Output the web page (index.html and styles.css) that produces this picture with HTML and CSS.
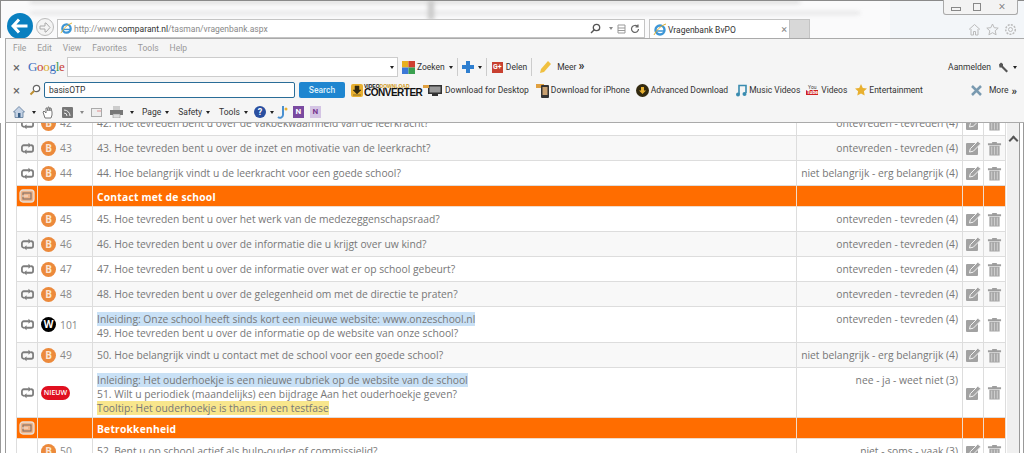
FILE: index.html
```html
<!DOCTYPE html>
<html lang="nl">
<head>
    <meta charset="UTF-8">
    <title>Vragenbank BvPO</title>
    <link rel="stylesheet" href="styles.css">
</head>
<body>

<svg class="defs" width="0" height="0">
    <symbol id="i-repeat" viewBox="0 0 14 14">
        <path d="M3.500 10.500H3A2 2 0 0 1 1 8.500V5.500A2 2 0 0 1 3 3.500H8.500M10.500 3.500H11A2 2 0 0 1 13 5.500v3a2 2 0 0 1-2 2H5.500" fill="none" stroke="#7d7d7d" stroke-width="1.900"/>
        <path d="M8 .8l3.200 2.700L8 6.200zM6 7.800l-3.200 2.700L6 13.200z" fill="#7d7d7d"/>
    </symbol>
    <symbol id="i-section" viewBox="0 0 16 16">
        <rect x="1" y="2" width="14" height="12" rx="3" fill="#eeb48a" stroke="#e8e0d8" stroke-width="1.300"/>
        <rect x="4" y="5" width="8" height="6" fill="none" stroke="#8a7468" stroke-width="1.200"/>
        <path d="M3 8h6" stroke="#f4e4d8"/>
    </symbol>
    <symbol id="i-edit" viewBox="0 0 16 16">
        <rect x="1" y="3" width="12" height="12" rx="1" fill="#a2a2a2"/>
        <path d="M4.500 12l.8-3.300L12.800 1.200l3 2.500-7.500 7.500z" fill="#a2a2a2" stroke="#f4f4f4"/>
    </symbol>
    <symbol id="i-trash" viewBox="0 0 16 16">
        <path d="M1 2.500h14v2H1zM5.500 1h5v1.500h-5z" fill="#9e9e9e"/>
        <path d="M2.500 5h11v10.500h-11z" fill="#a8a8a8"/>
        <path d="M5 6v8.500M8 6v8.500M11 6v8.500" stroke="#d0d0d0"/>
    </symbol>
</svg>

<div class="backdrop">
    <div class="blur blur-1"></div>
    <div class="blur blur-2"></div>
    <div class="blur blur-3"></div>
    <div class="glare"></div>
</div>

<header class="titlebar">
    <div class="nav-btn back-btn">
        <svg width="18" height="16" viewBox="0 0 18 16"><path d="M8 1.500L2 8l6 6.500M2.500 8H16.500" fill="none" stroke="#fff" stroke-width="3"/></svg>
    </div>
    <div class="nav-btn fwd-btn">
        <svg width="12" height="11" viewBox="0 0 12 11"><path d="M6 1h1l4 4.500-4 4.500H6V7H1V4h5z" fill="none" stroke="#aaa"/></svg>
    </div>
    <div class="address">
        <svg class="ie-logo" width="13" height="13" viewBox="0 0 14 14"><circle cx="7" cy="7" r="4.500" fill="none" stroke="#3d96d6" stroke-width="2.400"/><path d="M2 8h10" stroke="#3d96d6" stroke-width="1.500"/><path d="M1 12c2-4 6-9 12-11" fill="none" stroke="#e0b030"/></svg>
        <span class="url">http://www.<b>comparant.nl</b>/tasman/vragenbank.aspx</span>
        <span class="addr-tools">
            <svg width="11" height="11" viewBox="0 0 11 11"><circle cx="6.500" cy="4.500" r="3.200" fill="none" stroke="#555" stroke-width="1.300"/><path d="M4 7L1 10" stroke="#555" stroke-width="1.500"/></svg>
            <i class="caret grey"></i>
            <svg width="9" height="10" viewBox="0 0 9 10"><path d="M1 1h7v8H1zM1 4h7M1 6.500h7" fill="none" stroke="#999"/></svg>
            <svg width="10" height="10" viewBox="0 0 10 10"><path d="M8.500 5a3.500 3.500 0 1 1-1-2.500M8 .5v2.500H5.500" fill="none" stroke="#666" stroke-width="1.200"/></svg>
        </span>
    </div>
    <div class="tab">
        <svg class="ie-logo" width="14" height="14" viewBox="0 0 14 14"><circle cx="7" cy="7" r="4.500" fill="none" stroke="#3d96d6" stroke-width="2.400"/><path d="M2 8h10" stroke="#3d96d6" stroke-width="1.500"/><path d="M1 12c2-4 6-9 12-11" fill="none" stroke="#e0b030"/></svg>
        <span class="tab-title">Vragenbank BvPO</span>
        <span class="tab-close">×</span>
    </div>
    <div class="tab-new"></div>
    <div class="chrome-icons">
        <svg width="13" height="13" viewBox="0 0 13 13"><path d="M1 6.500L6.500 1.500 12 6.500M3 6v6h2.500V8.500h2V12H10V6" fill="none" stroke="#bbb"/></svg>
        <svg width="13" height="13" viewBox="0 0 13 13"><path d="M6.500 1l1.700 3.700 4 .4-3 2.700.9 4-3.600-2.100-3.600 2.100.9-4-3-2.700 4-.4z" fill="none" stroke="#bbb"/></svg>
        <svg width="13" height="13" viewBox="0 0 13 13"><circle cx="6.500" cy="6.500" r="2" fill="none" stroke="#bbb"/><circle cx="6.500" cy="6.500" r="4.800" fill="none" stroke="#bbb" stroke-width="1.500" stroke-dasharray="2 1.200"/></svg>
    </div>
    <div class="win-controls">
        <span class="win-btn win-first"><i class="win-min"></i></span>
        <span class="win-btn"><i class="win-max"></i></span>
        <span class="win-btn win-close">×</span>
    </div>
</header>

<div class="toolbars">
    <div class="menu-row">
        <span>File</span><span>Edit</span><span>View</span><span>Favorites</span><span>Tools</span><span>Help</span>
    </div>

    <div class="bar google-bar">
        <span class="bar-x">×</span>
        <span class="google-logo"><b class="g-b">G</b><b class="g-r">o</b><b class="g-y">o</b><b class="g-b">g</b><b class="g-g">l</b><b class="g-r">e</b></span>
        <div class="google-input"><i class="caret"></i></div>
        <svg class="ic-zoeken" width="13" height="13" viewBox="0 0 13 13"><rect width="6.500" height="6.500" fill="#e8b020"/><rect x="6.500" width="6.500" height="6.500" fill="#d04030"/><rect y="6.500" width="6.500" height="6.500" fill="#3c78d8"/><rect x="6.500" y="6.500" width="6.500" height="6.500" fill="#3aa050"/></svg>
        <span class="tb-text zoeken">Zoeken</span><i class="caret"></i>
        <i class="sep"></i>
        <svg width="12" height="12" viewBox="0 0 12 12"><path d="M4 0h4v4h4v4H8v4H4V8H0V4h4z" fill="#2f7fd0"/></svg>
        <i class="caret"></i>
        <i class="sep"></i>
        <span class="gplus">G+</span>
        <span class="tb-text">Delen</span>
        <i class="sep"></i>
        <svg class="ic-pencil" width="13" height="14" viewBox="0 0 13 14"><path d="M9 1l3 3-7 8-4 1 1-4z" fill="#f0c040"/></svg>
        <span class="tb-text meer">Meer <b>»</b></span>
        <span class="bar-right">
            <span class="tb-text">Aanmelden</span>
            <svg class="ic-wrench" width="11" height="11" viewBox="0 0 11 11"><path d="M1 2.500L3 .5l2 1.500v2l5 5-1.500 1.500-5-5h-2z" fill="#555"/></svg>
            <i class="caret flush"></i>
        </span>
    </div>

    <div class="bar search-bar">
        <span class="bar-x">×</span>
        <svg class="ic-mag" width="12" height="12" viewBox="0 0 12 12"><circle cx="7.500" cy="4.500" r="3.200" fill="#fff" stroke="#666" stroke-width="1.200"/><path d="M5 7L1.500 10.500" stroke="#c09030" stroke-width="2"/></svg>
        <div class="search-input">basisOTP</div>
        <div class="search-btn">Search</div>
        <div class="vdc-logo">
            <svg class="vdc-icon" width="12" height="13" viewBox="0 0 12 13"><rect width="12" height="13" rx="2" fill="#e8b030"/><path d="M4 2h4v4h2l-4 4-4-4h2zM2 11h8" fill="#332a10" stroke="#332a10" stroke-width=".5"/></svg>
            <span class="vdc-text"><small>VIDEO<em>DOWNLOAD</em></small>CONVERTER</span>
        </div>
        <svg class="ic-desktop" width="19" height="13" viewBox="0 0 19 13"><rect x="5" y="1" width="14" height="9" fill="#333"/><rect x="6.500" y="2.500" width="11" height="6" fill="#999"/><path d="M0 1h6v3H0z" fill="#e0a040"/><path d="M9 10h6v2H9z" fill="#333"/></svg>
        <span class="tb-text">Download for Desktop</span>
        <svg class="ic-phone" width="13" height="15" viewBox="0 0 13 15"><path d="M0 1h8v4H0z" fill="#e0a040"/><rect x="5" y="2" width="8" height="13" rx="1" fill="#333"/><rect x="6.500" y="4" width="5" height="8" fill="#c8a070"/></svg>
        <span class="tb-text">Download for iPhone</span>
        <svg class="ic-adv" width="13" height="13" viewBox="0 0 13 13"><circle cx="6.500" cy="6.500" r="6.500" fill="#332a10"/><path d="M5 3h3v3.500h2L6.500 10 3 6.500h2z" fill="#e8b030"/></svg>
        <span class="tb-text">Advanced Download</span>
        <svg class="ic-music" width="11" height="13" viewBox="0 0 11 13"><path d="M3 10V1.500h7V9" fill="none" stroke="#3a8cb0" stroke-width="1.600"/><circle cx="2" cy="10.500" r="2" fill="#3a8cb0"/><circle cx="8.500" cy="10" r="2" fill="#3a8cb0"/></svg>
        <span class="tb-text">Music Videos</span>
        <span class="ic-yt"><small>You</small><b>Tube</b></span>
        <span class="tb-text">Videos</span>
        <svg class="ic-star" width="12" height="12" viewBox="0 0 12 12"><path d="M6 0l1.800 3.900 4.200.5-3.100 2.900.8 4.200L6 9.400l-3.700 2.100.8-4.200L0 4.400l4.200-.5z" fill="#e8b030"/></svg>
        <span class="tb-text">Entertainment</span>
        <span class="bar-right">
            <svg width="13" height="13" viewBox="0 0 13 13"><path d="M2 2l9 9M11 2L2 11" stroke="#7a9ab0" stroke-width="2.500"/></svg>
            <span class="tb-text more">More</span>
            <b class="more-arrows">»</b>
        </span>
    </div>

    <div class="bar command-bar">
        <svg class="cmd-home" width="12" height="12" viewBox="0 0 12 12"><path d="M6 .5L.5 6H2v5.500h8V6h1.500z" fill="#c4d2e4" stroke="#5a7a9a" stroke-width=".8"/><rect x="5" y="7" width="2.500" height="4.500" fill="#3a5f85"/></svg>
        <i class="caret cmd-c1"></i>
        <svg class="cmd-hand" width="12" height="13" viewBox="0 0 12 13"><path d="M3 12L1 6l1-1 2 2V2l1 0 1 3V1h1l1 4V2h1l1 4v3l-1 3z" fill="#fff" stroke="#777"/></svg>
        <svg class="cmd-rss" width="11" height="11" viewBox="0 0 11 11"><rect width="11" height="11" rx="1" fill="#777"/><path d="M2 3a6 6 0 0 1 6 6M2 6a3 3 0 0 1 3 3" fill="none" stroke="#eee"/></svg>
        <i class="caret grey cmd-c2"></i>
        <svg class="cmd-mail" width="11" height="9" viewBox="0 0 11 9"><rect x=".5" y=".5" width="10" height="8" fill="#eee" stroke="#aaa"/><path d="M6 3h4" stroke="#e09090"/></svg>
        <svg class="cmd-print" width="13" height="12" viewBox="0 0 13 12"><rect x="3" width="7" height="4" fill="#ccc"/><rect y="4" width="13" height="5" fill="#777"/><rect x="3" y="8" width="7" height="4" fill="#ddd" stroke="#888" stroke-width=".5"/></svg>
        <i class="caret cmd-c3"></i>
        <span class="tb-text cmd-menu cmd-page">Page</span><i class="caret"></i>
        <span class="tb-text cmd-menu">Safety</span><i class="caret"></i>
        <span class="tb-text cmd-menu">Tools</span><i class="caret"></i>
        <span class="help-icon">?</span><i class="caret"></i>
        <svg class="cmd-ext" width="11" height="13" viewBox="0 0 11 13"><path d="M6 0v9a3 3 0 0 1-5 2" fill="none" stroke="#4a90d0" stroke-width="2"/><circle cx="9" cy="3" r="1.500" fill="#e8b030"/></svg>
        <span class="one-note">N</span>
        <span class="one-note light">N</span>
    </div>
</div>

<main class="page">
    <div class="frame-line frame-outer"></div>
    <div class="frame-line"></div>
    <div class="frame-line frame-right"></div>
    <div class="frame-line frame-end"></div>
    <div class="table-wrap">
        <table class="vragen">
            <colgroup>
                <col class="col-move"><col class="col-badge"><col class="col-vraag"><col class="col-schaal"><col class="col-edit"><col class="col-del">
            </colgroup>
            <tbody id="rows"></tbody>
        </table>
        <div class="scrollbar"><i class="scroll-up"></i></div>
    </div>
</main>

<script src="rows.js"></script>
</body>
</html>
```

FILE: rows.js
```js
// vragenlijst rows, first one sits half under the toolbar
const rows = [
    { nr: 42, badge: 'B', lines: ['42. Hoe tevreden bent u over de vakbekwaamheid van de leerkracht?'], schaal: 'ontevreden - tevreden (4)' },
    { nr: 43, badge: 'B', lines: ['43. Hoe tevreden bent u over de inzet en motivatie van de leerkracht?'], schaal: 'ontevreden - tevreden (4)' },
    { nr: 44, badge: 'B', lines: ['44. Hoe belangrijk vindt u de leerkracht voor een goede school?'], schaal: 'niet belangrijk - erg belangrijk (4)' },
    { section: 'Contact met de school' },
    { nr: 45, badge: 'B', noMove: true, lines: ['45. Hoe tevreden bent u over het werk van de medezeggenschapsraad?'], schaal: 'ontevreden - tevreden (4)' },
    { nr: 46, badge: 'B', lines: ['46. Hoe tevreden bent u over de informatie die u krijgt over uw kind?'], schaal: 'ontevreden - tevreden (4)' },
    { nr: 47, badge: 'B', lines: ['47. Hoe tevreden bent u over de informatie over wat er op school gebeurt?'], schaal: 'ontevreden - tevreden (4)' },
    { nr: 48, badge: 'B', lines: ['48. Hoe tevreden bent u over de gelegenheid om met de directie te praten?'], schaal: 'ontevreden - tevreden (4)' },
    { nr: 101, badge: 'W', intro: 'Inleiding: Onze school heeft sinds kort een nieuwe website: www.onzeschool.nl', lines: ['49. Hoe tevreden bent u over de informatie op de website van onze school?'], schaal: 'ontevreden - tevreden (4)' },
    { nr: 49, badge: 'B', lines: ['50. Hoe belangrijk vindt u contact met de school voor een goede school?'], schaal: 'niet belangrijk - erg belangrijk (4)' },
    { nieuw: true, intro: 'Inleiding: Het ouderhoekje is een nieuwe rubriek op de website van de school', lines: ['51. Wilt u periodiek (maandelijks) een bijdrage Aan het ouderhoekje geven?'], tip: 'Tooltip: Het ouderhoekje is thans in een testfase', schaal: 'nee - ja - weet niet (3)' },
    { section: 'Betrokkenheid' },
    { nr: 50, badge: 'B', noMove: true, lines: ['52. Bent u op school actief als hulp-ouder of commissielid?'], schaal: 'niet - soms - vaak (3)' }
];

function icon(name, size) {
    return `<svg width="${size}" height="${size}"><use href="#i-${name}"/></svg>`;
}

function badgeCell(row) {
    if (row.nieuw) return '<span class="badge-nieuw">NIEUW</span>';
    const kind = row.badge === 'W' ? 'badge badge-w' : 'badge';
    return `<span class="${kind}">${row.badge}</span><span class="nr">${row.nr}</span>`;
}

const tbody = document.getElementById('rows');
tbody.innerHTML = rows.map(row => {
    if (row.section) {
        return `<tr class="section">
            <td class="cell-icon">${icon('section', 16)}</td><td></td>
            <td class="vraag">${row.section}</td><td></td><td></td><td></td>
        </tr>`;
    }
    let text = '';
    if (row.intro) text += `<div><span class="intro">${row.intro}</span></div>`;
    text += row.lines.map(l => `<div>${l}</div>`).join('');
    if (row.tip) text += `<div><span class="tip">${row.tip}</span></div>`;
    return `<tr>
        <td class="cell-icon">${row.noMove ? '' : icon('repeat', 13)}</td>
        <td class="cell-badge">${badgeCell(row)}</td>
        <td class="vraag">${text}</td>
        <td class="schaal">${row.schaal}</td>
        <td class="cell-icon">${icon('edit', 16)}</td>
        <td class="cell-icon">${icon('trash', 15)}</td>
    </tr>`;
}).join('');
```

FILE: styles.css
```css
/* General styles */
html, body {
    margin: 0;
    padding: 0;
    height: 453px;
    overflow: hidden;
}

body {
    position: relative;
    font-family: "Open Sans", Arial, sans-serif;
    background-color: #fff;
    color: #666;
}

.defs {
    position: absolute;
}

/* Blurred page behind the glass */
.backdrop {
    position: absolute;
    left: 0;
    top: 0;
    width: 100%;
    height: 38px;
    background-color: #fafafb;
    overflow: hidden;
}

.blur {
    position: absolute;
    background-color: #c8c8c8;
    filter: blur(2px);
}

.blur-1 {
    left: 30px;
    top: 1px;
    width: 770px;
    height: 2px;
}

.blur-2 {
    left: 30px;
    top: 12px;
    width: 830px;
    height: 2px;
    opacity: 0.7;
}

.blur-3 {
    left: 428px;
    top: 0;
    width: 6px;
    height: 20px;
}

.glare {
    position: absolute;
    left: 890px;
    top: 0;
    width: 134px;
    height: 38px;
    background-color: #f3f6f9;
}

/* Title bar */
.titlebar {
    position: relative;
    height: 38px;
    display: flex;
    align-items: flex-start;
    padding-left: 6px;
    box-sizing: border-box;
    border-top: 1px solid #8a8a8a;
    border-left: 1px solid #8a8a8a;
}

.nav-btn {
    display: flex;
    align-items: center;
    justify-content: center;
    border-radius: 50%;
    box-sizing: border-box;
}

.back-btn {
    width: 26px;
    height: 26px;
    margin-top: 12px;
    background-color: #0a80c0;
}

.fwd-btn {
    width: 18px;
    height: 18px;
    margin: 17px 0 0 3px;
    border: 1px solid #bbb;
    background-color: #f4f4f4;
}

.address {
    display: flex;
    align-items: center;
    width: 588px;
    height: 19px;
    margin: 18px 0 0 3px;
    padding-left: 2px;
    box-sizing: border-box;
    border: 1px solid #c4c4c4;
    background-color: #fff;
    font-family: Roboto, Arial, sans-serif;
}

.url {
    margin-left: 1px;
    font-size: 8.5px;
    color: #888;
}

.url b {
    font-weight: 400;
    color: #333;
}

.addr-tools {
    display: flex;
    align-items: center;
    gap: 4px;
    margin-left: auto;
    margin-right: 4px;
}

.tab {
    display: flex;
    align-items: center;
    width: 141px;
    height: 20px;
    margin: 18px 0 0 4px;
    padding: 0 2px 0 3px;
    box-sizing: border-box;
    background-color: #fff;
    border: 1px solid #c4c4c4;
    border-bottom: none;
    font-family: Roboto, Arial, sans-serif;
}

.tab-title {
    margin-left: 1px;
    font-size: 8.5px;
    color: #333;
}

.tab-close {
    margin-left: auto;
    font-size: 11px;
    color: #888;
}

.tab-new {
    width: 20px;
    height: 20px;
    margin-top: 18px;
    background-color: #d8d8d8;
    border: 1px solid #c4c4c4;
    border-left: none;
    box-sizing: border-box;
}

.chrome-icons {
    position: absolute;
    right: 7px;
    top: 22px;
    display: flex;
    gap: 5px;
}

.win-controls {
    position: absolute;
    right: 6px;
    top: -1px;
    display: flex;
    height: 14px;
    border: 1px solid #aaa;
    border-top: none;
    border-radius: 0 0 3px 3px;
    background-color: #f3f3f3;
}

.win-btn {
    display: flex;
    align-items: center;
    justify-content: center;
    width: 20px;
    font-size: 12px;
    line-height: 12px;
    color: #777;
}

.win-first {
    width: 23px;
}

.win-close {
    width: 30px;
}

.win-min {
    width: 8px;
    height: 2px;
    margin-top: 4px;
    border: 1px solid #888;
}

.win-max {
    width: 6px;
    height: 6px;
    border: 1px solid #888;
}

/* Toolbars */
.toolbars {
    position: relative;
    z-index: 2;
    height: 85px;
    margin-left: 5px;
    box-sizing: border-box;
    border: 1px solid #aaa;
    border-right: none;
    background-color: #f5f5f5;
    font-family: Roboto, Arial, sans-serif;
    font-size: 8.5px;
    color: #333;
}

.menu-row {
    display: flex;
    height: 17px;
    align-items: center;
    gap: 11px;
    padding-left: 7px;
    color: #999;
}

.bar {
    display: flex;
    align-items: center;
}

.google-bar {
    height: 22px;
}

.search-bar {
    height: 24px;
}

.command-bar {
    height: 20px;
    padding-left: 7px;
}

.bar-x {
    width: 21px;
    text-align: center;
    font-size: 13px;
    line-height: 13px;
    color: #666;
}

.bar-right {
    display: flex;
    align-items: center;
    gap: 4px;
    margin-left: auto;
    margin-right: 7px;
}

.ic-wrench {
    margin-left: 3px;
}

.more {
    margin-left: 2px;
}

.tb-text {
    white-space: nowrap;
}

.caret {
    display: inline-block;
    width: 0;
    height: 0;
    margin-left: 4px;
    border-left: 2.5px solid transparent;
    border-right: 2.5px solid transparent;
    border-top: 3px solid #222;
}

.caret.grey {
    border-top-color: #888;
}

.caret.flush {
    margin-left: 0;
}

.sep {
    width: 1px;
    height: 18px;
    margin: 0 4px;
    background-color: #ccc;
}

.google-logo {
    width: 39px;
    margin-left: 1px;
    font-family: "Liberation Serif", serif;
    font-size: 13px;
    letter-spacing: -0.3px;
}

.google-logo b {
    font-weight: 400;
}

.g-b { color: #3a6fc0; }
.g-r { color: #c83c30; }
.g-y { color: #d8a820; }
.g-g { color: #3a9a50; }

.google-input {
    display: flex;
    align-items: center;
    justify-content: flex-end;
    width: 331px;
    height: 20px;
    margin-right: 4px;
    padding-right: 3px;
    box-sizing: border-box;
    border: 1px solid #ccc;
    background-color: #fff;
}

.zoeken {
    margin-left: 2px;
}

.gplus {
    width: 11px;
    height: 11px;
    margin: 0 3px 0 1px;
    background-color: #c84030;
    color: #fff;
    font-size: 7px;
    font-weight: 700;
    line-height: 11px;
    text-align: center;
}

.ic-pencil {
    margin: 0 5px 0 3px;
}

.meer b {
    font-size: 12px;
    line-height: 9px;
}

.ic-mag {
    margin: 0 3px 0 2px;
}

.search-input {
    width: 251px;
    height: 16px;
    padding-left: 4px;
    box-sizing: border-box;
    border: 1px solid #2a6d98;
    border-radius: 2px;
    background-color: #fff;
    line-height: 14px;
}

.search-btn {
    width: 46px;
    height: 16px;
    margin-left: 4px;
    border-radius: 2px;
    background-color: #1f86d0;
    color: #dff0fb;
    font-weight: 500;
    line-height: 16px;
    text-align: center;
}

.vdc-logo {
    display: flex;
    align-items: center;
    width: 66px;
    margin: 0 6px;
}

.vdc-icon {
    flex: none;
}

.vdc-text {
    margin-left: 1px;
    font-family: "Liberation Sans", Arial, sans-serif;
    font-size: 10px;
    font-weight: 700;
    line-height: 8px;
    letter-spacing: -0.5px;
    color: #111;
}

.vdc-text small {
    display: block;
    font-size: 5px;
    line-height: 5px;
    letter-spacing: 0;
}

.vdc-text em {
    font-style: normal;
    color: #d09a20;
}

.ic-desktop {
    margin-right: 3px;
}

.ic-phone {
    margin: 0 2px 0 7px;
}

.ic-adv {
    margin: 0 2px 0 6px;
}

.ic-music {
    margin: 0 2px 0 8px;
}

.ic-yt {
    display: flex;
    flex-direction: column;
    align-items: center;
    width: 12px;
    margin: 0 3px 0 6px;
    font-size: 5px;
    line-height: 5px;
    color: #444;
}

.ic-yt b {
    width: 12px;
    background-color: #d02020;
    color: #fff;
    text-align: center;
}

.ic-yt small {
    font-size: 5px;
}

.ic-star {
    margin: 0 2px 0 8px;
}

.more-arrows {
    margin-left: -1px;
    font-size: 11px;
    line-height: 8px;
    align-self: flex-start;
    margin-top: 4px;
}

.cmd-c1 { margin-left: 7px; }
.cmd-hand { margin-left: 6px; }
.cmd-rss { margin-left: 8px; }
.cmd-c2 { margin-left: 7px; }
.cmd-mail { margin-left: 7px; }
.cmd-print { margin-left: 8px; }
.cmd-c3 { margin-left: 7px; }
.cmd-menu { margin-left: 9px; }
.cmd-page { margin-left: 8px; }

.help-icon {
    width: 12px;
    height: 12px;
    margin-left: 6px;
    border-radius: 50%;
    background-color: #2a4fa0;
    color: #fff;
    font-size: 9px;
    font-weight: 700;
    line-height: 12px;
    text-align: center;
}

.cmd-ext {
    margin-left: 3px;
}

.one-note {
    width: 11px;
    height: 12px;
    margin-left: 5px;
    background-color: #7a4aa0;
    color: #fff;
    font-size: 8px;
    font-weight: 700;
    line-height: 12px;
    text-align: center;
}

.one-note.light {
    margin-left: 6px;
    background-color: #d4c4e4;
    color: #7a3a90;
}

/* Page under the toolbars */
.page {
    position: relative;
    height: 330px;
    overflow: hidden;
    background-color: #fff;
}

.frame-line {
    position: absolute;
    left: 5px;
    top: 0;
    bottom: 0;
    width: 1px;
    background-color: #999;
}

.frame-outer {
    left: 0;
}

.frame-right {
    left: 1019px;
}

.frame-end {
    left: 1023px;
}

.table-wrap {
    display: flex;
    align-items: flex-start;
    margin: -13px 0 0 16px;
}

/* Table */
.vragen {
    width: 989px;
    table-layout: fixed;
    border-collapse: collapse;
    font-size: 10.3px;
    line-height: 14px;
    color: #777;
}

.col-move { width: 21px; }
.col-badge { width: 55px; }
.col-vraag { width: 704px; }
.col-schaal { width: 166px; }
.col-edit { width: 21px; }
.col-del { width: 22px; }

.vragen td {
    height: 25px;
    padding: 5px 4px 2px;
    box-sizing: border-box;
    border: 1px solid #ddd;
    vertical-align: top;
}

.vragen tr:nth-child(even) td {
    background-color: #f8f8f8;
}

.vragen .cell-icon {
    padding: 0;
    text-align: center;
    vertical-align: middle;
}

.cell-icon svg {
    display: block;
    margin: 0 auto;
}

.vragen .cell-badge {
    padding: 0 0 0 3px;
    vertical-align: middle;
}

.schaal {
    text-align: right;
    white-space: nowrap;
}

.badge {
    display: inline-block;
    width: 15px;
    height: 15px;
    border-radius: 50%;
    background-color: #ec8a3c;
    color: #fbe6d4;
    font-size: 10px;
    font-weight: 700;
    line-height: 15px;
    text-align: center;
    vertical-align: middle;
}

.badge-w {
    background-color: #000;
    color: #fff;
}

.nr {
    margin-left: 4px;
    color: #888;
    vertical-align: middle;
}

.badge-nieuw {
    display: inline-block;
    width: 29px;
    height: 14px;
    border-radius: 7px;
    background-color: #e01020;
    color: #fff;
    font-size: 7px;
    font-weight: 600;
    line-height: 14px;
    text-align: center;
    vertical-align: middle;
}

.intro {
    background-color: #c9e1f6;
}

.tip {
    background-color: #f8e68c;
}

.vragen tr.section td {
    height: 21px;
    padding-top: 4px;
    background-color: #ff6d00;
    border-color: #f0dccb;
    color: #fff;
    font-weight: 700;
    letter-spacing: 0.2px;
}

.vragen tr.section .cell-icon {
    padding: 0;
}

.scrollbar {
    width: 13px;
    height: 345px;
    margin-left: 1px;
    flex: none;
    background-color: #f0f0f0;
    display: flex;
    justify-content: center;
}

.scroll-up {
    width: 5px;
    height: 5px;
    margin-top: 27px;
    border-left: 2px solid #555;
    border-top: 2px solid #555;
    transform: rotate(45deg);
}
```
